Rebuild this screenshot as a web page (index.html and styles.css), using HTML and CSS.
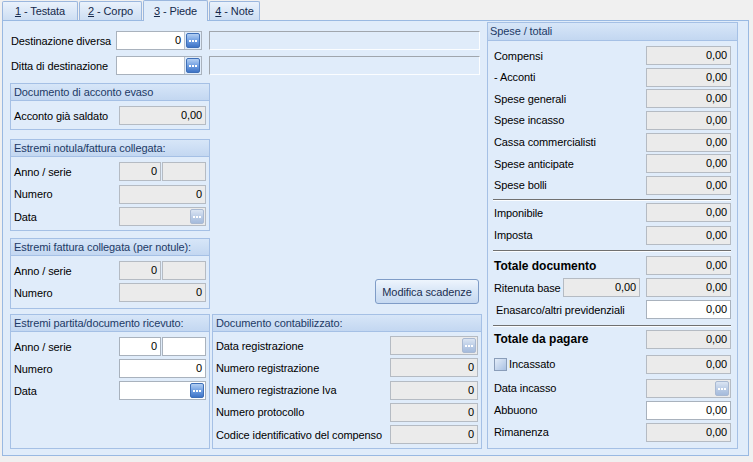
FILE: index.html
```html
<!DOCTYPE html>
<html>
<head>
<meta charset="utf-8">
<link rel="stylesheet" href="styles.css">
</head>
<body>
<div class="tabs">
  <div class="tab t1"><u>1</u>&nbsp;- Testata</div>
  <div class="tab t2"><u>2</u>&nbsp;- Corpo</div>
  <div class="tab t3 active"><u>3</u>&nbsp;- Piede</div>
  <div class="tab t4"><u>4</u>&nbsp;- Note</div>
</div>
<div class="panel">
  <div class="leftcol">
    <div class="toprow">
      <span class="tlabel">Destinazione diversa</span>
      <div class="combo"><span class="cval">0</span><span class="cbtn"><span class="btn"><i></i><i></i><i></i></span></span></div>
      <div class="longbox"></div>
    </div>
    <div class="toprow">
      <span class="tlabel">Ditta di destinazione</span>
      <div class="combo"><span class="cval"></span><span class="cbtn"><span class="btn"><i></i><i></i><i></i></span></span></div>
      <div class="longbox"></div>
    </div>

    <div class="mid">
      <div class="stack">
        <div class="grp g1">
          <div class="gh">Documento di acconto evaso</div>
          <div class="gb">
            <div class="fr"><span class="lb">Acconto già saldato</span><div class="fld">0,00</div></div>
          </div>
        </div>
        <div class="grp g2">
          <div class="gh">Estremi notula/fattura collegata:</div>
          <div class="gb">
            <div class="fr"><span class="lb">Anno / serie</span><div class="pair"><div class="fld a">0</div><div class="fld b"></div></div></div>
            <div class="fr"><span class="lb">Numero</span><div class="fld">0</div></div>
            <div class="fr"><span class="lb">Data</span><div class="fld bt"><span class="btn dis"><i></i><i></i><i></i></span></div></div>
          </div>
        </div>
        <div class="grp g3">
          <div class="gh">Estremi fattura collegata (per notule):</div>
          <div class="gb">
            <div class="fr"><span class="lb">Anno / serie</span><div class="pair"><div class="fld a">0</div><div class="fld b"></div></div></div>
            <div class="fr"><span class="lb">Numero</span><div class="fld">0</div></div>
          </div>
        </div>
      </div>
      <div class="btnarea"><button class="mbtn">Modifica scadenze</button></div>
    </div>

    <div class="bot">
      <div class="grp g4">
        <div class="gh">Estremi partita/documento ricevuto:</div>
        <div class="gb">
          <div class="fr"><span class="lb">Anno / serie</span><div class="pair"><div class="fld wh a">0</div><div class="fld wh b"></div></div></div>
          <div class="fr"><span class="lb">Numero</span><div class="fld wh">0</div></div>
          <div class="fr"><span class="lb">Data</span><div class="fld wh bt"><span class="btn"><i></i><i></i><i></i></span></div></div>
        </div>
      </div>
      <div class="grp g5">
        <div class="gh">Documento contabilizzato:</div>
        <div class="gb">
          <div class="fr"><span class="lb">Data registrazione</span><div class="fld bt"><span class="btn dis"><i></i><i></i><i></i></span></div></div>
          <div class="fr"><span class="lb">Numero registrazione</span><div class="fld">0</div></div>
          <div class="fr"><span class="lb">Numero registrazione Iva</span><div class="fld">0</div></div>
          <div class="fr"><span class="lb">Numero protocollo</span><div class="fld">0</div></div>
          <div class="fr"><span class="lb">Codice identificativo del compenso</span><div class="fld">0</div></div>
        </div>
      </div>
    </div>
  </div>

  <div class="grp tot">
    <div class="gh">Spese / totali</div>
    <div class="tb">
      <div class="sec sA">
        <div class="fr"><span class="lb">Compensi</span><div class="fld">0,00</div></div>
        <div class="fr"><span class="lb">- Acconti</span><div class="fld">0,00</div></div>
        <div class="fr"><span class="lb">Spese generali</span><div class="fld">0,00</div></div>
        <div class="fr"><span class="lb">Spese incasso</span><div class="fld">0,00</div></div>
        <div class="fr"><span class="lb">Cassa commercialisti</span><div class="fld">0,00</div></div>
        <div class="fr"><span class="lb">Spese anticipate</span><div class="fld">0,00</div></div>
        <div class="fr"><span class="lb">Spese bolli</span><div class="fld">0,00</div></div>
      </div>
      <div class="sep s1"></div>
      <div class="sec sB">
        <div class="fr"><span class="lb">Imponibile</span><div class="fld">0,00</div></div>
        <div class="fr"><span class="lb">Imposta</span><div class="fld">0,00</div></div>
      </div>
      <div class="sep s2"></div>
      <div class="sec sC">
        <div class="fr"><span class="lb big">Totale documento</span><div class="fld">0,00</div></div>
        <div class="fr"><span class="lb">Ritenuta base</span><div class="fld small">0,00</div><div class="fld">0,00</div></div>
        <div class="fr"><span class="lb ind">Enasarco/altri previdenziali</span><div class="fld wh">0,00</div></div>
      </div>
      <div class="sep s3"></div>
      <div class="sec sD">
        <div class="fr"><span class="lb big">Totale da pagare</span><div class="fld">0,00</div></div>
        <div class="fr r2"><span class="lb chk"><span class="cb"></span>Incassato</span><div class="fld">0,00</div></div>
        <div class="fr r3"><span class="lb">Data incasso</span><div class="fld bt"><span class="btn dis"><i></i><i></i><i></i></span></div></div>
        <div class="fr r4"><span class="lb">Abbuono</span><div class="fld wh">0,00</div></div>
        <div class="fr r4"><span class="lb">Rimanenza</span><div class="fld">0,00</div></div>
      </div>
    </div>
  </div>
</div>
</body>
</html>
```
FILE: styles.css
```css
* { box-sizing: border-box; }
html, body { margin: 0; padding: 0; }
body {
  background: #f0f0f0;
  font-family: "Liberation Sans", Arial, sans-serif;
  font-size: 11px;
  letter-spacing: -0.1px;
  color: #000;
  width: 753px;
  height: 462px;
  overflow: hidden;
}

/* tabs */
.tabs { display: flex; height: 20px; padding-left: 2px; align-items: flex-end; }
.tab {
  height: 19px;
  margin-right: 1px;
  border: 1px solid #9bb7de;
  border-bottom: none;
  border-radius: 2px 2px 0 0;
  background: linear-gradient(#eaf2fc, #cddef3);
  color: #15294b;
  display: flex;
  align-items: center;
  justify-content: center;
  white-space: nowrap;
}
.tab.active { height: 21px; margin-bottom: -1px; background: #e0ecfa; position: relative; z-index: 1; }
.tab u { text-decoration: underline; }
.t1 { width: 76px; }
.t2 { width: 63px; }
.t3 { width: 65px; }
.t4 { width: 51px; }

/* panel */
.panel {
  margin-left: 2px;
  width: 747px;
  border: 1px solid #99b9e2;
  background: #e0ecfa;
  display: flex;
  padding: 0 10px 6px 7px;
}
.leftcol { width: 472px; display: flex; flex-direction: column; padding-top: 10px; }

.toprow { display: flex; align-items: center; height: 19px; }
.toprow + .toprow { margin-top: 6px; }
.tlabel { width: 106px; padding-left: 1px; white-space: nowrap; }
.combo { width: 86px; height: 19px; display: flex; border: 1px solid #a9b2bd; }
.cval { flex: 1; background: #fff; border-right: 1px solid #b9c3cf; text-align: right; padding-right: 3px; line-height: 17px; }
.cbtn { width: 16px; display: flex; align-items: center; justify-content: center; }
.longbox {
  margin-left: 7px;
  width: 271px;
  height: 19px;
  border: 1px solid;
  border-color: #a0a6ad #fbfdff #fbfdff #a0a6ad;
}

/* small "..." button */
.btn {
  width: 14px;
  height: 15px;
  border-radius: 2px;
  border: 1px solid #3e6fb8;
  background: linear-gradient(#b3cff3, #6b9be0 55%, #3f74c6);
  display: flex;
  align-items: center;
  justify-content: center;
  gap: 1px;
  padding-top: 1px;
}
.btn i { width: 2px; height: 2px; background: #fff; display: block; }
.btn.dis { border-color: #a9b9d2; background: linear-gradient(#dbe5f3, #b9cbe5 55%, #a5bbdc); }

/* groups */
.grp { border: 1px solid #a5c0e5; background: #e0ecfa; display: flex; flex-direction: column; }
.gh {
  height: 17px;
  background: linear-gradient(#d7e6f8, #c3d7f1);
  border-bottom: 1px solid #a5c0e5;
  color: #1d3a66;
  padding-left: 3px;
  line-height: 16px;
  white-space: nowrap;
}
.gb { padding: 5px 3px 4px 3px; display: flex; flex-direction: column; gap: 3px; }

.mid { display: flex; margin-top: 8px; }
.stack { width: 200px; display: flex; flex-direction: column; }
.g2 { margin-top: 9px; }
.g2 .gb { gap: 3.5px; }
.g3 { margin-top: 7px; }
.g3 .gb { padding-bottom: 6px; }
.btnarea { flex: 1; display: flex; align-items: flex-end; justify-content: flex-end; padding: 0 3px 5px 0; }
.mbtn {
  width: 104px;
  height: 25px;
  border: 1px solid #7f9cc7;
  border-radius: 3px;
  background: linear-gradient(#eef5fd, #d7e5f6 50%, #c6d9f1);
  font: inherit;
  letter-spacing: -0.1px;
  color: #1b2f52;
  padding: 0;
}

.bot { flex: 1; display: flex; gap: 2px; margin-top: 5px; }
.g4 { width: 200px; }
.g5 { flex: 1; }
.g5 .gb { padding-top: 4px; gap: 3.25px; }
.g5 .fld { width: 88px; }

/* field rows */
.fr { display: flex; align-items: center; height: 19px; flex-shrink: 0; }
.lb { flex: 1; white-space: nowrap; }
.fld {
  width: 87px;
  height: 19px;
  border: 1px solid #b5bbc3;
  background: #ebebeb;
  text-align: right;
  padding-right: 3px;
  line-height: 17px;
  flex-shrink: 0;
}
.fld.wh { background: #fff; border-color: #a9b2bd; }
.fld.bt { display: flex; justify-content: flex-end; align-items: center; padding-right: 1px; }
.pair { display: flex; gap: 1px; }
.fld.a { width: 42px; }
.fld.b { width: 44px; }

/* totals */
.tot { width: 251px; margin: 1px 0 0 5px; }
.tot .gh { height: 18px; padding-left: 2px; line-height: 17px; }
.tb { padding: 5px 6px 5px 5px; display: flex; flex-direction: column; flex: 1; }
.tot .fld { width: 85px; }
.tot .lb { padding-left: 1px; }
.sec { display: flex; flex-direction: column; }
.sA { gap: 2.667px; }
.sep { height: 2px; border-top: 1px solid #707070; border-bottom: 1px solid #fbfdff; flex-shrink: 0; }
.s1 { margin-top: 4px; }
.sB { margin-top: 2.5px; gap: 3.5px; }
.s2 { margin-top: 5px; }
.sC { margin-top: 4.5px; gap: 3px; }
.s3 { margin-top: 5.5px; }
.sD { margin-top: 3px; }
.r2 { margin-top: 6px; }
.r3 { margin-top: 5px; }
.r4 { margin-top: 3px; }
.lb.big { font-weight: bold; font-size: 12px; letter-spacing: 0; }
.lb.ind { padding-left: 3px; }
.tot .fld.small { width: 77px; margin-right: 6px; }
.chk { display: flex; align-items: center; }
.cb {
  width: 13px;
  height: 13px;
  border: 1px solid #8a9db9;
  background: linear-gradient(135deg, #e4edf9, #a9c1e3);
  margin-right: 2px;
}
```
